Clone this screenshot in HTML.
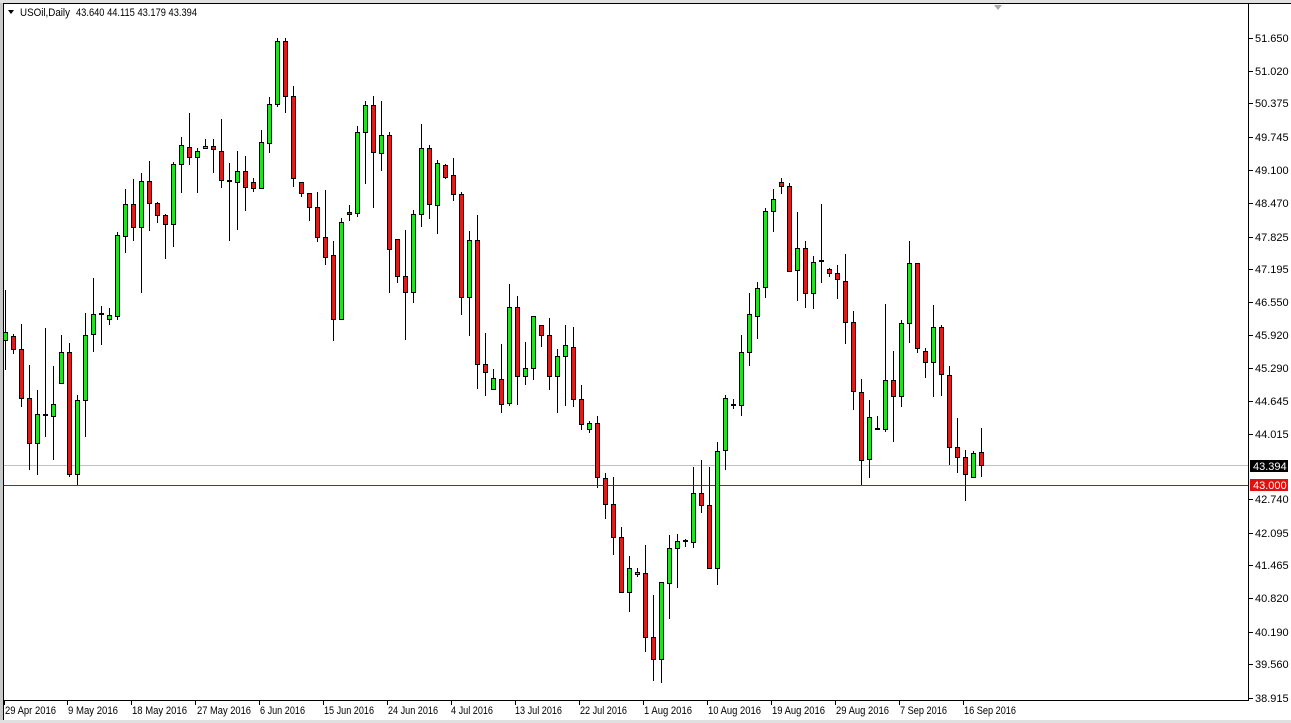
<!DOCTYPE html>
<html><head><meta charset="utf-8"><style>
html,body{margin:0;padding:0;background:#fff;}
svg{display:block;font-family:"Liberation Sans",Tahoma,sans-serif;font-size:11px;}
</style></head><body>
<svg width="1291" height="723" viewBox="0 0 1291 723" xmlns="http://www.w3.org/2000/svg">
<rect x="0" y="0" width="1291" height="723" fill="#fff"/>
<rect x="0" y="0" width="3" height="723" fill="#c8c8c8"/>
<rect x="0" y="0" width="1291" height="3" fill="#e0e0e0"/>
<rect x="0" y="720" width="1291" height="3" fill="#e0e0e0"/>
<path d="M3.5 3V720M3 3.5H1291" stroke="#000" stroke-width="1"/>
<path d="M1248.5 4V700.5M4 700.5H1249" stroke="#000" stroke-width="1"/>
<path d="M994 5h8l-4 5z" fill="#aaa"/>
<path d="M8 10h6l-3 4z" fill="#000"/>
<text x="20" y="16" fill="#000" textLength="50" lengthAdjust="spacingAndGlyphs">USOil,Daily</text>
<text x="76" y="16" fill="#000" textLength="121" lengthAdjust="spacingAndGlyphs">43.640 44.115 43.179 43.394</text>
<rect x="4" y="465" width="1244" height="1" fill="#c0c0c0"/>
<rect x="4" y="485" width="1244" height="1" fill="#e00000"/>
<path fill="none" stroke="#000" stroke-width="1" d="M5.5 290V370M13.5 334V354M21.5 324V407M29.5 365V470M37.5 390V475M45.5 328V437M53.5 366V460M61.5 335V383M69.5 343V477M77.5 395V485M85.5 313V437M93.5 278V352M101.5 306V345M109.5 308V325M117.5 232V320M125.5 189V253M133.5 179V241M141.5 173V293M149.5 161V231M157.5 202V223M165.5 214V259M173.5 162V247M181.5 137V193M189.5 113V165M197.5 148V193M205.5 139V148M213.5 139V173M221.5 119V188M229.5 163V241M237.5 151V230M245.5 156V211M253.5 178V192M261.5 130V188M269.5 97V153M277.5 38V107M285.5 38V113M293.5 86V187M301.5 182V197M309.5 193V221M317.5 192V242M325.5 190V265M333.5 241V341M341.5 218V319M349.5 205V221M357.5 126V217M365.5 101V184M373.5 96V208M381.5 101V171M389.5 132V293M397.5 239V283M405.5 230V340M413.5 210V303M421.5 124V227M429.5 145V219M437.5 160V234M445.5 164V179M453.5 158V201M461.5 192V315M469.5 231V336M477.5 215V389M485.5 333V396M493.5 369V389M501.5 344V413M509.5 284V406M517.5 296V405M525.5 342V385M533.5 316V380M541.5 325V347M549.5 318V390M557.5 349V413M565.5 325V406M573.5 327V407M581.5 385V430M589.5 421V433M597.5 416V488M605.5 473V519M613.5 477V555M621.5 527V592M629.5 556V612M637.5 568V577M645.5 545V652M653.5 595V681M661.5 582V683M669.5 535V619M677.5 534V588M685.5 539V547M693.5 467V548M701.5 460V513M709.5 467V569M717.5 442V585M725.5 395V470M733.5 399V409M741.5 335V416M749.5 293V366M757.5 282V339M765.5 208V298M773.5 189V232M781.5 178V194M789.5 183V271M797.5 212V301M805.5 241V308M813.5 256V309M821.5 204V283M829.5 268V277M837.5 265V299M845.5 254V344M853.5 311V410M861.5 379V485M869.5 400V478M877.5 416V429M885.5 304V432M893.5 351V442M901.5 320V407M909.5 241V343M917.5 263V353M925.5 348V378M933.5 305V397M941.5 325V396M949.5 366V465M957.5 418V473M965.5 450V501M973.5 451V477M981.5 428V477"/>
<path fill="none" stroke="#000" stroke-width="2" d="M43 415h5M99 314h5M227 181h5M683 541h5M731 405h5M875 429h5"/>
<path fill="#22e022" stroke="#000" stroke-width="1" d="M3.5 332.5h4v8h-4zM35.5 414.5h4v29h-4zM51.5 404.5h4v12h-4zM59.5 352.5h4v31h-4zM75.5 400.5h4v74h-4zM83.5 335.5h4v65h-4zM91.5 314.5h4v20h-4zM107.5 315.5h4v4h-4zM115.5 235.5h4v81h-4zM123.5 204.5h4v32h-4zM139.5 181.5h4v46h-4zM171.5 164.5h4v60h-4zM179.5 145.5h4v19h-4zM195.5 151.5h4v6h-4zM203.5 146.5h4v2h-4zM235.5 171.5h4v11h-4zM259.5 142.5h4v46h-4zM267.5 104.5h4v39h-4zM275.5 41.5h4v63h-4zM339.5 222.5h4v97h-4zM355.5 132.5h4v81h-4zM363.5 105.5h4v27h-4zM379.5 135.5h4v18h-4zM411.5 214.5h4v78h-4zM419.5 148.5h4v66h-4zM435.5 163.5h4v42h-4zM467.5 240.5h4v57h-4zM491.5 378.5h4v11h-4zM507.5 307.5h4v96h-4zM523.5 368.5h4v8h-4zM531.5 316.5h4v52h-4zM555.5 356.5h4v20h-4zM563.5 345.5h4v11h-4zM587.5 423.5h4v6h-4zM627.5 568.5h4v24h-4zM635.5 572.5h4v2h-4zM659.5 582.5h4v77h-4zM667.5 548.5h4v35h-4zM675.5 541.5h4v7h-4zM691.5 493.5h4v49h-4zM715.5 451.5h4v117h-4zM723.5 398.5h4v52h-4zM739.5 352.5h4v53h-4zM747.5 314.5h4v38h-4zM755.5 288.5h4v28h-4zM763.5 211.5h4v76h-4zM771.5 199.5h4v12h-4zM795.5 248.5h4v22h-4zM811.5 262.5h4v31h-4zM819.5 260.5h4v1h-4zM867.5 417.5h4v42h-4zM883.5 380.5h4v49h-4zM899.5 323.5h4v73h-4zM907.5 263.5h4v60h-4zM931.5 327.5h4v35h-4zM971.5 453.5h4v24h-4z"/>
<path fill="#dd1c1c" stroke="#000" stroke-width="1" d="M11.5 336.5h4v13h-4zM19.5 349.5h4v49h-4zM27.5 398.5h4v45h-4zM67.5 352.5h4v122h-4zM131.5 204.5h4v23h-4zM147.5 181.5h4v22h-4zM155.5 203.5h4v12h-4zM163.5 215.5h4v9h-4zM187.5 147.5h4v10h-4zM211.5 146.5h4v3h-4zM219.5 151.5h4v29h-4zM243.5 171.5h4v16h-4zM251.5 182.5h4v6h-4zM283.5 41.5h4v55h-4zM291.5 96.5h4v82h-4zM299.5 182.5h4v11h-4zM307.5 193.5h4v14h-4zM315.5 207.5h4v30h-4zM323.5 237.5h4v20h-4zM331.5 255.5h4v64h-4zM347.5 212.5h4v2h-4zM371.5 105.5h4v47h-4zM387.5 135.5h4v114h-4zM395.5 239.5h4v37h-4zM403.5 276.5h4v16h-4zM427.5 148.5h4v56h-4zM443.5 165.5h4v12h-4zM451.5 175.5h4v19h-4zM459.5 194.5h4v103h-4zM475.5 240.5h4v124h-4zM483.5 364.5h4v8h-4zM499.5 379.5h4v25h-4zM515.5 307.5h4v69h-4zM539.5 325.5h4v10h-4zM547.5 335.5h4v41h-4zM571.5 347.5h4v52h-4zM579.5 399.5h4v25h-4zM595.5 423.5h4v54h-4zM603.5 478.5h4v26h-4zM611.5 504.5h4v33h-4zM619.5 537.5h4v55h-4zM643.5 573.5h4v64h-4zM651.5 637.5h4v22h-4zM699.5 493.5h4v12h-4zM707.5 505.5h4v63h-4zM779.5 182.5h4v4h-4zM787.5 186.5h4v85h-4zM803.5 248.5h4v45h-4zM827.5 269.5h4v4h-4zM835.5 273.5h4v6h-4zM843.5 281.5h4v41h-4zM851.5 322.5h4v69h-4zM859.5 392.5h4v68h-4zM891.5 380.5h4v16h-4zM915.5 263.5h4v85h-4zM923.5 351.5h4v11h-4zM939.5 327.5h4v47h-4zM947.5 375.5h4v72h-4zM955.5 447.5h4v10h-4zM963.5 457.5h4v17h-4zM979.5 452.5h4v13h-4z"/>
<path stroke="#000" d="M1249 38.5h4M1249 71.5h4M1249 103.5h4M1249 137.5h4M1249 170.5h4M1249 203.5h4M1249 237.5h4M1249 269.5h4M1249 302.5h4M1249 335.5h4M1249 368.5h4M1249 401.5h4M1249 434.5h4M1249 499.5h4M1249 533.5h4M1249 565.5h4M1249 598.5h4M1249 632.5h4M1249 664.5h4M1249 698.5h4"/>
<g fill="#000">
<text x="1255" y="42">51.650</text><text x="1255" y="75">51.020</text><text x="1255" y="107">50.375</text><text x="1255" y="141">49.745</text><text x="1255" y="174">49.100</text><text x="1255" y="207">48.470</text><text x="1255" y="241">47.825</text><text x="1255" y="273">47.195</text><text x="1255" y="306">46.550</text><text x="1255" y="339">45.920</text><text x="1255" y="372">45.290</text><text x="1255" y="405">44.645</text><text x="1255" y="438">44.015</text><text x="1255" y="503">42.740</text><text x="1255" y="537">42.095</text><text x="1255" y="569">41.465</text><text x="1255" y="602">40.820</text><text x="1255" y="636">40.190</text><text x="1255" y="668">39.560</text><text x="1255" y="702">38.915</text>
</g>
<rect x="1250" y="460" width="38" height="12" fill="#000"/>
<text x="1253" y="470" fill="#fff">43.394</text>
<rect x="1250" y="479" width="38" height="12" fill="#e01010"/>
<text x="1253" y="489" fill="#fff">43.000</text>
<path stroke="#000" d="M4.5 700v5M67.5 700v5M131.5 700v5M195.5 700v5M259.5 700v5M323.5 700v5M387.5 700v5M451.5 700v5M515.5 700v5M579.5 700v5M643.5 700v5M707.5 700v5M771.5 700v5M835.5 700v5M899.5 700v5M963.5 700v5"/>
<g fill="#000" lengthAdjust="spacingAndGlyphs">
<text x="5" y="714" textLength="51" lengthAdjust="spacingAndGlyphs">29 Apr 2016</text>
<text x="68" y="714" textLength="50" lengthAdjust="spacingAndGlyphs">9 May 2016</text>
<text x="132" y="714" textLength="55" lengthAdjust="spacingAndGlyphs">18 May 2016</text>
<text x="197" y="714" textLength="54" lengthAdjust="spacingAndGlyphs">27 May 2016</text>
<text x="260" y="714" textLength="45" lengthAdjust="spacingAndGlyphs">6 Jun 2016</text>
<text x="324" y="714" textLength="50" lengthAdjust="spacingAndGlyphs">15 Jun 2016</text>
<text x="388" y="714" textLength="50" lengthAdjust="spacingAndGlyphs">24 Jun 2016</text>
<text x="451" y="714" textLength="42" lengthAdjust="spacingAndGlyphs">4 Jul 2016</text>
<text x="515" y="714" textLength="47" lengthAdjust="spacingAndGlyphs">13 Jul 2016</text>
<text x="580" y="714" textLength="47" lengthAdjust="spacingAndGlyphs">22 Jul 2016</text>
<text x="644" y="714" textLength="48" lengthAdjust="spacingAndGlyphs">1 Aug 2016</text>
<text x="708" y="714" textLength="53" lengthAdjust="spacingAndGlyphs">10 Aug 2016</text>
<text x="772" y="714" textLength="53" lengthAdjust="spacingAndGlyphs">19 Aug 2016</text>
<text x="836" y="714" textLength="53" lengthAdjust="spacingAndGlyphs">29 Aug 2016</text>
<text x="900" y="714" textLength="47" lengthAdjust="spacingAndGlyphs">7 Sep 2016</text>
<text x="964" y="714" textLength="52" lengthAdjust="spacingAndGlyphs">16 Sep 2016</text>
</g>
</svg>
</body></html>
